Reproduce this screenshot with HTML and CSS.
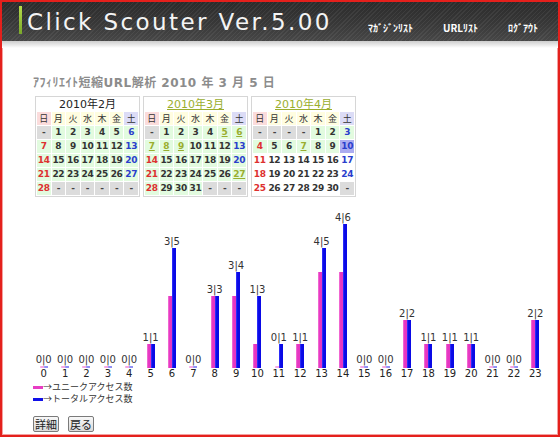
FILE: index.html
```html
<!DOCTYPE html>
<html lang="ja">
<head>
<meta charset="utf-8">
<title>Click Scouter</title>
<link rel="stylesheet" href="styles.css">
</head>
<body>
<div class="frame">
  <header class="header">
    <div class="brand"><span class="brand-bar"></span><h1 class="brand-title">Click Scouter Ver.5.00</h1></div>
    <nav class="nav"><a href="#">ﾏｶﾞｼﾞﾝﾘｽﾄ</a><a href="#">URLﾘｽﾄ</a><a href="#">ﾛｸﾞｱｳﾄ</a></nav>
  </header>
  <div class="header-shade"></div>
  <main class="content">
    <p class="subtitle">ｱﾌｨﾘｴｲﾄ短縮URL解析 2010 年 3 月 5 日</p>

    <div class="calendars">
      <table class="cal">
        <tr><th colspan="7" class="cal-title">2010年2月</th></tr>
        <tr class="dow"><td class="d-sun">日</td><td>月</td><td>火</td><td>水</td><td>木</td><td>金</td><td class="d-sat">土</td></tr>
        <tr class="wk"><td class="n">-</td><td>1</td><td>2</td><td>3</td><td>4</td><td>5</td><td>6</td></tr>
        <tr class="wk"><td>7</td><td>8</td><td>9</td><td>10</td><td>11</td><td>12</td><td>13</td></tr>
        <tr class="wk"><td>14</td><td>15</td><td>16</td><td>17</td><td>18</td><td>19</td><td>20</td></tr>
        <tr class="wk"><td>21</td><td>22</td><td>23</td><td>24</td><td>25</td><td>26</td><td>27</td></tr>
        <tr class="wk"><td>28</td><td class="n">-</td><td class="n">-</td><td class="n">-</td><td class="n">-</td><td class="n">-</td><td class="n">-</td></tr>
      </table>
      <table class="cal">
        <tr><th colspan="7" class="cal-title"><a href="#">2010年3月</a></th></tr>
        <tr class="dow"><td class="d-sun">日</td><td>月</td><td>火</td><td>水</td><td>木</td><td>金</td><td class="d-sat">土</td></tr>
        <tr class="wk"><td class="n">-</td><td>1</td><td>2</td><td>3</td><td>4</td><td><a href="#">5</a></td><td><a href="#">6</a></td></tr>
        <tr class="wk"><td><a href="#">7</a></td><td><a href="#">8</a></td><td><a href="#">9</a></td><td>10</td><td>11</td><td>12</td><td>13</td></tr>
        <tr class="wk"><td>14</td><td>15</td><td>16</td><td>17</td><td>18</td><td>19</td><td>20</td></tr>
        <tr class="wk"><td>21</td><td>22</td><td>23</td><td>24</td><td>25</td><td>26</td><td><a href="#">27</a></td></tr>
        <tr class="wk"><td>28</td><td>29</td><td>30</td><td>31</td><td class="n">-</td><td class="n">-</td><td class="n">-</td></tr>
      </table>
      <table class="cal">
        <tr><th colspan="7" class="cal-title"><a href="#">2010年4月</a></th></tr>
        <tr class="dow"><td class="d-sun">日</td><td>月</td><td>火</td><td>水</td><td>木</td><td>金</td><td class="d-sat">土</td></tr>
        <tr class="wk"><td class="n">-</td><td class="n">-</td><td class="n">-</td><td class="n">-</td><td>1</td><td>2</td><td>3</td></tr>
        <tr class="wk"><td>4</td><td>5</td><td>6</td><td><a href="#">7</a></td><td>8</td><td>9</td><td class="t">10</td></tr>
        <tr class="wk"><td class="f">11</td><td class="f">12</td><td class="f">13</td><td class="f">14</td><td class="f">15</td><td class="f">16</td><td class="f">17</td></tr>
        <tr class="wk"><td class="f">18</td><td class="f">19</td><td class="f">20</td><td class="f">21</td><td class="f">22</td><td class="f">23</td><td class="f">24</td></tr>
        <tr class="wk"><td class="f">25</td><td class="f">26</td><td class="f">27</td><td class="f">28</td><td class="f">29</td><td class="f">30</td><td class="n">-</td></tr>
      </table>
    </div>

    <div class="chart">
      <div class="col"><span class="val">0|0</span><div class="bars"><i class="bar u zero"></i><i class="bar t zero"></i></div><span class="hour">0</span></div>
      <div class="col"><span class="val">0|0</span><div class="bars"><i class="bar u zero"></i><i class="bar t zero"></i></div><span class="hour">1</span></div>
      <div class="col"><span class="val">0|0</span><div class="bars"><i class="bar u zero"></i><i class="bar t zero"></i></div><span class="hour">2</span></div>
      <div class="col"><span class="val">0|0</span><div class="bars"><i class="bar u zero"></i><i class="bar t zero"></i></div><span class="hour">3</span></div>
      <div class="col"><span class="val">0|0</span><div class="bars"><i class="bar u zero"></i><i class="bar t zero"></i></div><span class="hour">4</span></div>
      <div class="col"><span class="val">1|1</span><div class="bars"><i class="bar u" style="height:24px"></i><i class="bar t" style="height:24px"></i></div><span class="hour">5</span></div>
      <div class="col"><span class="val">3|5</span><div class="bars"><i class="bar u" style="height:72px"></i><i class="bar t" style="height:120px"></i></div><span class="hour">6</span></div>
      <div class="col"><span class="val">0|0</span><div class="bars"><i class="bar u zero"></i><i class="bar t zero"></i></div><span class="hour">7</span></div>
      <div class="col"><span class="val">3|3</span><div class="bars"><i class="bar u" style="height:72px"></i><i class="bar t" style="height:72px"></i></div><span class="hour">8</span></div>
      <div class="col"><span class="val">3|4</span><div class="bars"><i class="bar u" style="height:72px"></i><i class="bar t" style="height:96px"></i></div><span class="hour">9</span></div>
      <div class="col"><span class="val">1|3</span><div class="bars"><i class="bar u" style="height:24px"></i><i class="bar t" style="height:72px"></i></div><span class="hour">10</span></div>
      <div class="col"><span class="val">0|1</span><div class="bars"><i class="bar u zero"></i><i class="bar t" style="height:24px"></i></div><span class="hour">11</span></div>
      <div class="col"><span class="val">1|1</span><div class="bars"><i class="bar u" style="height:24px"></i><i class="bar t" style="height:24px"></i></div><span class="hour">12</span></div>
      <div class="col"><span class="val">4|5</span><div class="bars"><i class="bar u" style="height:96px"></i><i class="bar t" style="height:120px"></i></div><span class="hour">13</span></div>
      <div class="col"><span class="val">4|6</span><div class="bars"><i class="bar u" style="height:96px"></i><i class="bar t" style="height:144px"></i></div><span class="hour">14</span></div>
      <div class="col"><span class="val">0|0</span><div class="bars"><i class="bar u zero"></i><i class="bar t zero"></i></div><span class="hour">15</span></div>
      <div class="col"><span class="val">0|0</span><div class="bars"><i class="bar u zero"></i><i class="bar t zero"></i></div><span class="hour">16</span></div>
      <div class="col"><span class="val">2|2</span><div class="bars"><i class="bar u" style="height:48px"></i><i class="bar t" style="height:48px"></i></div><span class="hour">17</span></div>
      <div class="col"><span class="val">1|1</span><div class="bars"><i class="bar u" style="height:24px"></i><i class="bar t" style="height:24px"></i></div><span class="hour">18</span></div>
      <div class="col"><span class="val">1|1</span><div class="bars"><i class="bar u" style="height:24px"></i><i class="bar t" style="height:24px"></i></div><span class="hour">19</span></div>
      <div class="col"><span class="val">1|1</span><div class="bars"><i class="bar u" style="height:24px"></i><i class="bar t" style="height:24px"></i></div><span class="hour">20</span></div>
      <div class="col"><span class="val">0|0</span><div class="bars"><i class="bar u zero"></i><i class="bar t zero"></i></div><span class="hour">21</span></div>
      <div class="col"><span class="val">0|0</span><div class="bars"><i class="bar u zero"></i><i class="bar t zero"></i></div><span class="hour">22</span></div>
      <div class="col"><span class="val">2|2</span><div class="bars"><i class="bar u" style="height:48px"></i><i class="bar t" style="height:48px"></i></div><span class="hour">23</span></div>
    </div>

    <ul class="legend">
      <li><span class="swatch u"></span>→ユニークアクセス数</li>
      <li><span class="swatch t"></span>→トータルアクセス数</li>
    </ul>

    <div class="buttons">
      <button class="btn" type="button">詳細</button>
      <button class="btn" type="button">戻る</button>
    </div>
  </main>
</div>
</body>
</html>
```

FILE: styles.css
```css
html, body {
  margin: 0;
  padding: 0;
  background: #fff;
}

body {
  font-family: "DejaVu Sans", "Noto Sans CJK JP", sans-serif;
  color: #333;
}

.frame {
  width: 560px;
  height: 437px;
  box-sizing: border-box;
  border: 2px solid #e4201c;
  box-shadow: inset 0 0 0 1px #f4a0a0;
  overflow: hidden;
}

/* Header */
.header {
  display: flex;
  justify-content: space-between;
  align-items: flex-start;
  height: 39px;
  box-sizing: border-box;
  padding: 4px 20px 0 17px;
  background:
    repeating-linear-gradient(135deg, rgba(255,255,255,0.06) 0 1px, rgba(0,0,0,0) 1px 3px),
    linear-gradient(#2b2b2b, #383838 55%, #474747);
}

.brand {
  display: flex;
  align-items: flex-start;
  gap: 5px;
}

.brand-bar {
  display: block;
  width: 3px;
  height: 28px;
  background: linear-gradient(#b6dc4a, #7aa82a);
}

.brand-title {
  margin: 0;
  padding-top: 2px;
  font-family: "DejaVu Sans", sans-serif;
  font-weight: normal;
  font-size: 23px;
  line-height: 28px;
  letter-spacing: 2.4px;
  color: #f4f4f4;
}

.nav {
  display: flex;
  gap: 30px;
  padding-top: 16px;
}

.nav a {
  font-family: "Noto Sans CJK JP", sans-serif;
  font-size: 10px;
  line-height: 12px;
  font-weight: bold;
  color: #fff;
  text-decoration: none;
}

.header-shade {
  height: 7px;
  background: linear-gradient(#cdcdcd, #fff);
}

/* Content */
.content {
  padding-left: 31px;
}

.subtitle {
  margin: 28px 0 6px;
  font-family: "DejaVu Sans", "Noto Sans CJK JP", sans-serif;
  font-size: 12px;
  line-height: 14px;
  font-weight: bold;
  letter-spacing: 0.5px;
  color: #8c8c8c;
}

.calendars {
  display: flex;
  gap: 3px;
  padding-left: 2px;
}

.cal {
  width: 105px;
  table-layout: fixed;
  border-collapse: separate;
  border-spacing: 1px;
  border: 1px solid #d6d6d6;
  background: #fff;
}

.cal th,
.cal td {
  padding: 0;
  text-align: center;
}

.cal-title {
  height: 13px;
  font-family: "DejaVu Sans", "Noto Sans CJK JP", sans-serif;
  font-size: 11px;
  line-height: 13px;
  font-weight: normal;
  color: #222;
}

.cal-title a,
.cal td a {
  color: #9aae2e;
  text-decoration: underline;
}

.cal td {
  height: 13px;
  font-size: 9px;
  line-height: 13px;
  font-weight: bold;
  letter-spacing: -0.3px;
  color: #333;
  background: #e2fbdf;
}

.cal tr.dow td {
  font-family: "Noto Sans CJK JP", sans-serif;
  font-weight: normal;
  font-size: 9px;
  letter-spacing: 0;
  background: #fffde0;
  color: #333;
}

.cal tr.dow td.d-sun {
  background: #fbdcdc;
}

.cal tr.dow td.d-sat {
  background: #dcdcf6;
}

.cal tr.wk td:first-child {
  color: #dd3030;
}

.cal tr.wk td:last-child {
  color: #2a3ecc;
}

.cal tr.wk td.n {
  background: #dcdcdc;
  color: #444;
}

.cal tr.wk td.f {
  background: #fff;
}

.cal tr.wk td.t {
  background: #acacf0;
}

/* Chart */
.chart {
  display: grid;
  grid-template-columns: repeat(24, 1fr);
  align-items: end;
  width: 513px;
  height: 183px;
}

.col {
  display: flex;
  flex-direction: column;
  align-items: center;
  justify-content: flex-end;
}

.val {
  font-size: 10px;
  line-height: 12px;
  color: #333;
  white-space: nowrap;
}

.bars {
  display: flex;
  align-items: flex-end;
}

.bar {
  display: block;
  width: 4px;
}

.bar.u {
  background: linear-gradient(90deg, #f57bd8, #e636c2 40%);
}

.bar.t {
  background: linear-gradient(90deg, #3a3aff, #0a0ae6 40%);
}

.bar.zero {
  height: 2px;
  opacity: 0.45;
}

.hour {
  font-size: 10px;
  line-height: 12px;
  color: #222;
}

/* Legend */
.legend {
  list-style: none;
  margin: 1px 0 0;
  padding: 0;
  font-family: "Noto Sans CJK JP", sans-serif;
  font-size: 9px;
  line-height: 12px;
  color: #333;
}

.legend li {
  display: flex;
  align-items: center;
}

.swatch {
  display: block;
  width: 10px;
  height: 3px;
}

.swatch.u {
  background: #e83cc4;
}

.swatch.t {
  background: #1010e8;
}

/* Buttons */
.buttons {
  display: flex;
  gap: 9px;
  margin-top: 11px;
}

.btn {
  height: 16px;
  padding: 0 1px;
  font-family: "Noto Sans CJK JP", sans-serif;
  font-size: 11px;
  line-height: 13px;
  color: #222;
  border: 1px solid #7a7a7a;
  border-radius: 2px;
  background: linear-gradient(#f8f8f8, #dadada);
}
```
